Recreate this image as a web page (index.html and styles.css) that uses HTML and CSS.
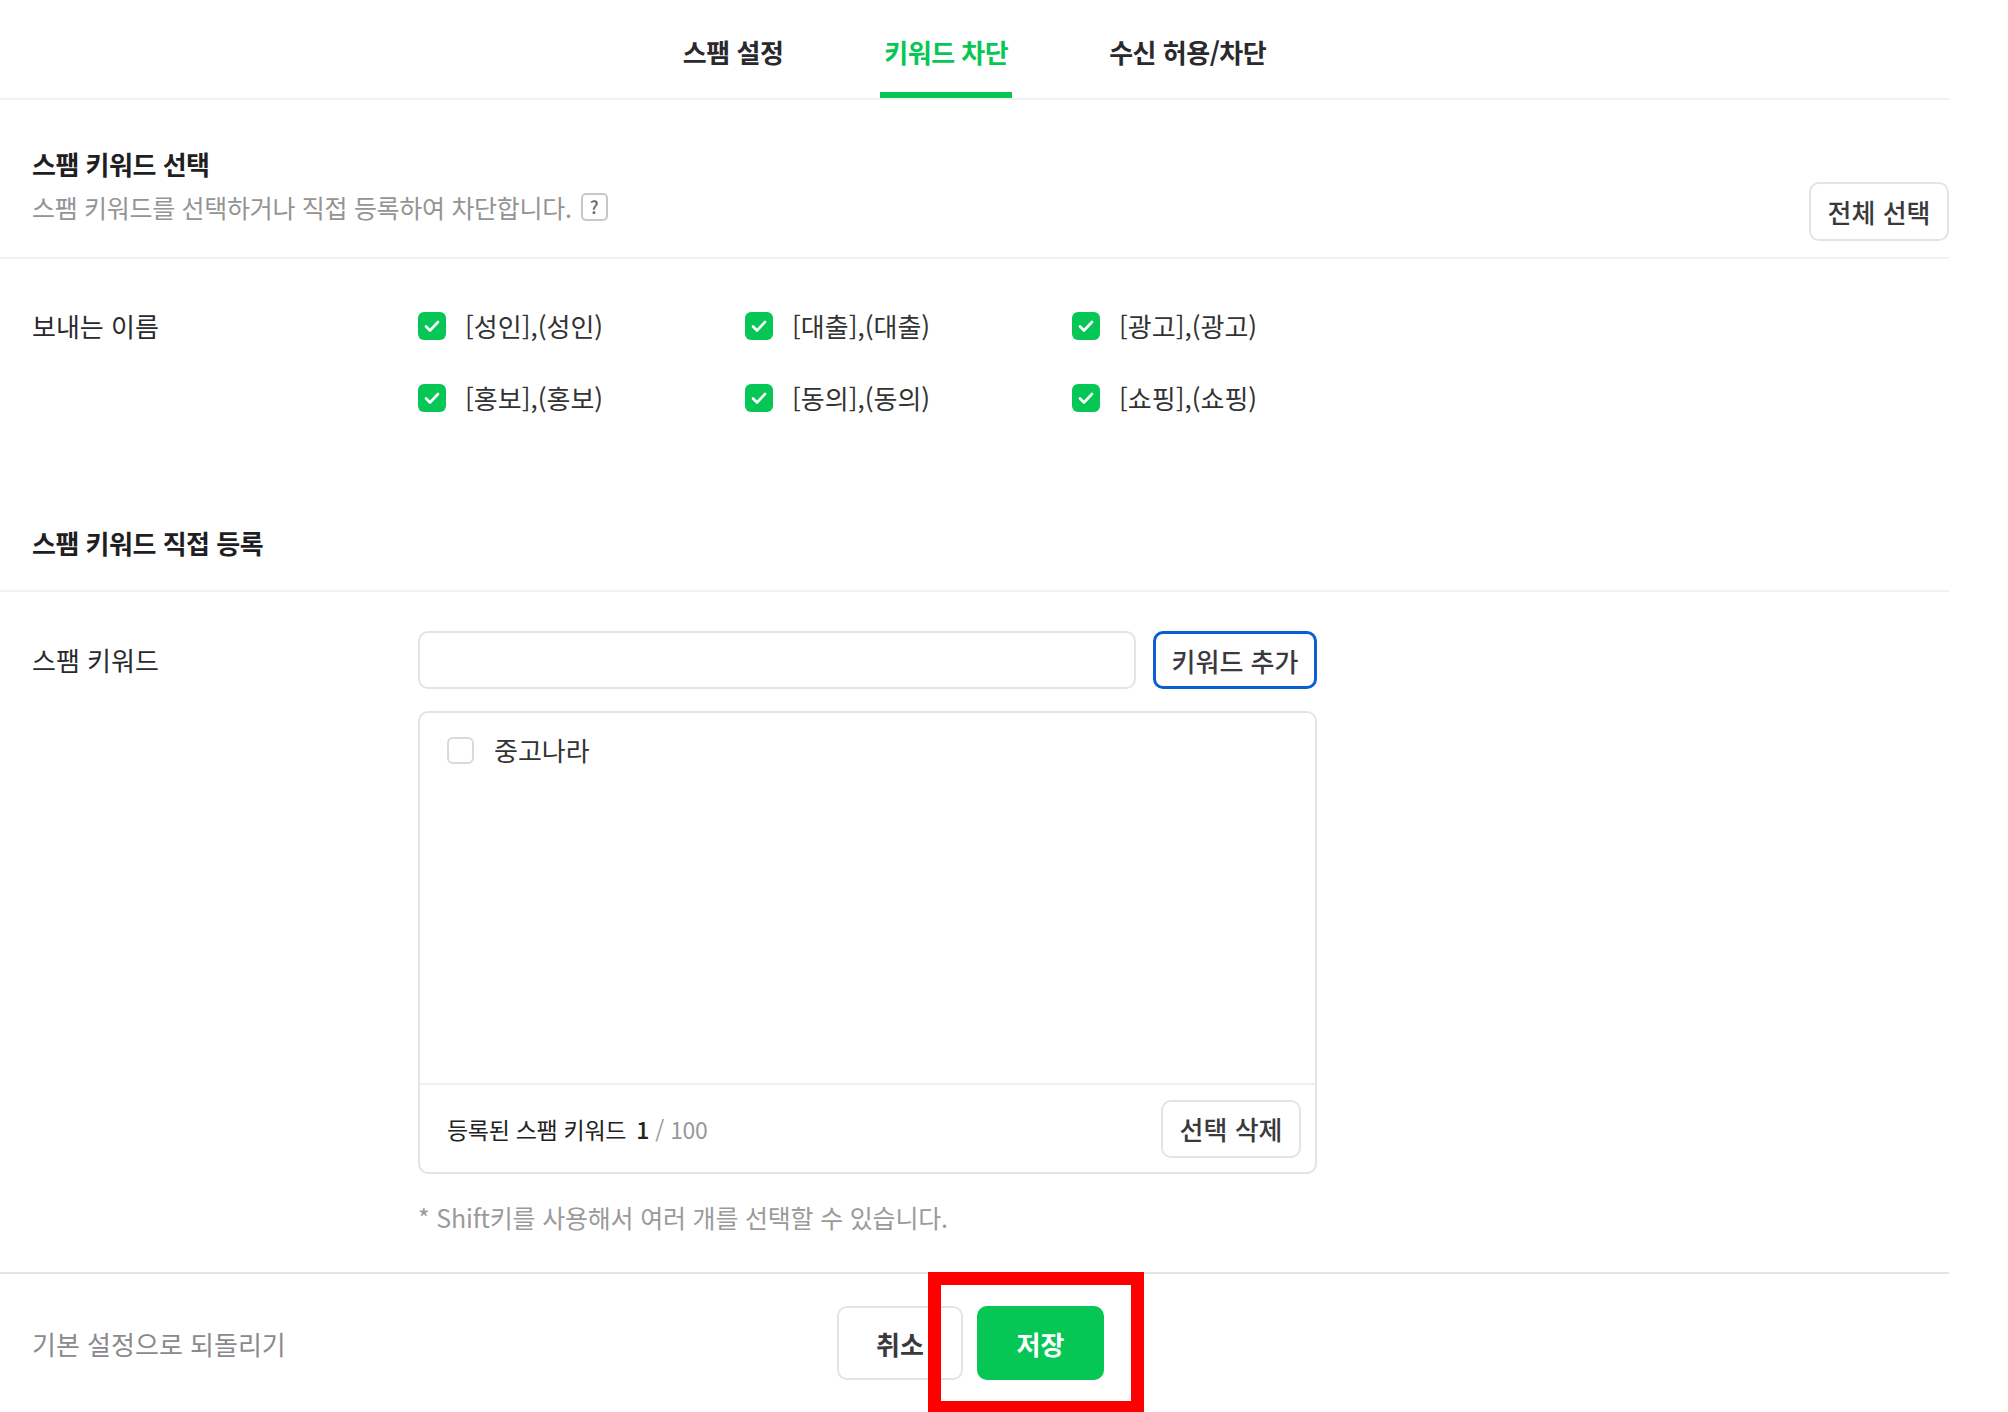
FILE: index.html
```html
<!DOCTYPE html>
<html lang="ko">
<head>
    <meta charset="UTF-8">
    <title>키워드 차단</title>
    <link rel="stylesheet" href="styles.css">
</head>
<body>
    <div class="page">
        <nav class="tabs">
            <a class="tab">스팸 설정</a>
            <a class="tab active">키워드 차단</a>
            <a class="tab">수신 허용/차단</a>
        </nav>

        <div class="sec-head">
            <div class="sec-text">
                <h2>스팸 키워드 선택</h2>
                <p class="sec-desc">스팸 키워드를 선택하거나 직접 등록하여 차단합니다.<span class="help">?</span></p>
            </div>
            <button class="btn btn-select-all">전체 선택</button>
        </div>

        <div class="field-row preset-row">
            <div class="field-label">보내는 이름</div>
            <div class="check-grid">
                <label class="check"><span class="box on"></span>[성인],(성인)</label>
                <label class="check"><span class="box on"></span>[대출],(대출)</label>
                <label class="check"><span class="box on"></span>[광고],(광고)</label>
                <label class="check"><span class="box on"></span>[홍보],(홍보)</label>
                <label class="check"><span class="box on"></span>[동의],(동의)</label>
                <label class="check"><span class="box on"></span>[쇼핑],(쇼핑)</label>
            </div>
        </div>

        <div class="sec-head plain">
            <h2>스팸 키워드 직접 등록</h2>
        </div>

        <div class="field-row keyword-row">
            <div class="field-label tall">스팸 키워드</div>
            <div class="keyword-area">
                <div class="add-line">
                    <input class="kw-input" type="text">
                    <button class="btn btn-add">키워드 추가</button>
                </div>
                <div class="kw-box">
                    <ul class="kw-list">
                        <li class="check"><span class="box"></span>중고나라</li>
                    </ul>
                    <div class="kw-foot">
                        <span class="kw-count">등록된 스팸 키워드 <b>1</b> <em>/ 100</em></span>
                        <button class="btn btn-del">선택 삭제</button>
                    </div>
                </div>
                <p class="note">* Shift키를 사용해서 여러 개를 선택할 수 있습니다.</p>
            </div>
        </div>

        <footer class="bottom">
            <a class="reset">기본 설정으로 되돌리기</a>
            <div class="actions">
                <button class="btn btn-cancel">취소</button>
                <button class="btn btn-save">저장</button>
            </div>
            <span></span>
            <div class="mark"></div>
        </footer>
    </div>
</body>
</html>
```

FILE: styles.css
```css
* {
    margin: 0;
    padding: 0;
    box-sizing: border-box;
    font-family: "Noto Sans CJK KR", "Noto Sans", sans-serif;
}

body {
    background-color: #fff;
    color: #222;
    overflow: hidden;
}

.page {
    width: 1949px;
    height: 1412px;
}

/* 상단 탭 */
.tabs {
    display: flex;
    justify-content: center;
    gap: 93px;
    height: 100px;
    border-bottom: 2px solid #f2f2f4;
}

.tab {
    font-size: 26px;
    font-weight: 700;
    line-height: 34px;
    color: #2a2a2e;
    padding: 35px 4px 23px;
    border-bottom: 6px solid transparent;
    letter-spacing: -0.5px;
}

.tab.active {
    color: #06c755;
    border-bottom-color: #06c755;
}

/* 섹션 제목 */
.sec-head {
    display: flex;
    justify-content: space-between;
    align-items: flex-end;
    padding: 48px 0 16px 32px;
    border-bottom: 2px solid #f2f2f4;
}

.sec-text {
    padding-bottom: 17px;
}

.sec-head h2 {
    font-size: 26px;
    font-weight: 700;
    line-height: 32px;
    color: #1e1e23;
    letter-spacing: -0.5px;
}

.sec-desc {
    margin-top: 10px;
    font-size: 25px;
    line-height: 34px;
    color: #949494;
    display: flex;
    align-items: center;
    letter-spacing: -0.3px;
}

.help {
    width: 27px;
    height: 28px;
    margin-left: 9px;
    border: 2px solid #c8c8cc;
    border-radius: 5px;
    font-size: 18px;
    font-weight: 500;
    line-height: 23px;
    text-align: center;
    color: #666;
}

.sec-head.plain {
    margin-top: 111px;
    padding: 0 0 31px 32px;
}

/* 버튼 */
.btn {
    background-color: #fff;
    border: 2px solid #e3e3e8;
    border-radius: 10px;
    font-size: 26px;
    font-weight: 500;
    color: #3a3a3e;
    cursor: pointer;
}

.btn-select-all {
    width: 140px;
    height: 59px;
}

/* 항목 행 */
.field-row {
    display: grid;
    grid-template-columns: 386px 1fr;
    padding-left: 32px;
}

.field-label {
    font-size: 26px;
    line-height: 36px;
    color: #2a2a2e;
}

.field-label.tall {
    line-height: 58px;
}

.preset-row {
    padding-top: 49px;
}

.check-grid {
    display: grid;
    grid-template-columns: repeat(3, 327px);
    row-gap: 36px;
}

.check {
    display: flex;
    align-items: center;
    gap: 19px;
    font-size: 26px;
    line-height: 36px;
    color: #333;
    list-style: none;
}

.box {
    width: 28px;
    height: 28px;
    border-radius: 6px;
    border: 2px solid #d7dae2;
    background-color: #fff;
    flex-shrink: 0;
}

.box.on {
    border: none;
    background: #06c755 url("data:image/svg+xml,%3Csvg xmlns='http://www.w3.org/2000/svg' viewBox='0 0 28 28'%3E%3Cpath d='M8 14.5l4 4 8-8.5' fill='none' stroke='%23fff' stroke-width='2.6' stroke-linecap='round' stroke-linejoin='round'/%3E%3C/svg%3E") center / 28px no-repeat;
}

/* 직접 등록 */
.keyword-row {
    padding-top: 39px;
}

.keyword-area {
    width: 899px;
}

.add-line {
    display: flex;
    gap: 17px;
}

.kw-input {
    flex: 1;
    height: 58px;
    border: 2px solid #e3e3e8;
    border-radius: 10px;
    outline: none;
}

.btn-add {
    width: 164px;
    height: 58px;
    border: 3px solid #0b5fd4;
}

.kw-box {
    margin-top: 22px;
    height: 463px;
    border: 2px solid #e3e3e8;
    border-radius: 10px;
    display: flex;
    flex-direction: column;
}

.kw-list {
    flex: 1;
    padding: 19px 27px;
}

.kw-list .check {
    gap: 20px;
}

.kw-list .box {
    width: 27px;
    height: 27px;
}

.kw-foot {
    height: 89px;
    border-top: 2px solid #efeff2;
    display: flex;
    align-items: center;
    justify-content: space-between;
    padding: 0 14px 0 27px;
}

.kw-count {
    font-size: 23px;
    color: #222;
    letter-spacing: -0.3px;
}

.kw-count b {
    font-weight: 500;
    margin-left: 4px;
}

.kw-count em {
    font-style: normal;
    color: #999;
}

.btn-del {
    width: 140px;
    height: 58px;
}

.note {
    margin-top: 26px;
    font-size: 25px;
    line-height: 34px;
    color: #9a9a9a;
    letter-spacing: -0.2px;
}

/* 하단 */
.bottom {
    position: relative;
    margin-top: 38px;
    height: 140px;
    border-top: 2px solid #e4e4e6;
    display: grid;
    grid-template-columns: 1fr auto 1fr;
    align-items: center;
    padding: 0 40px 0 32px;
}

.reset {
    font-size: 26px;
    color: #8a8a8e;
}

.actions {
    display: flex;
    gap: 14px;
}

.btn-cancel {
    width: 126px;
    height: 74px;
    font-size: 26px;
    font-weight: 700;
}

.btn-save {
    width: 127px;
    height: 74px;
    background-color: #06c755;
    border-color: #06c755;
    color: #fff;
    font-size: 26px;
    font-weight: 700;
}

/* 강조 표시 */
.mark {
    position: absolute;
    left: 928px;
    top: -2px;
    width: 216px;
    height: 142px;
    border: 13px solid #ff0000;
}
```
